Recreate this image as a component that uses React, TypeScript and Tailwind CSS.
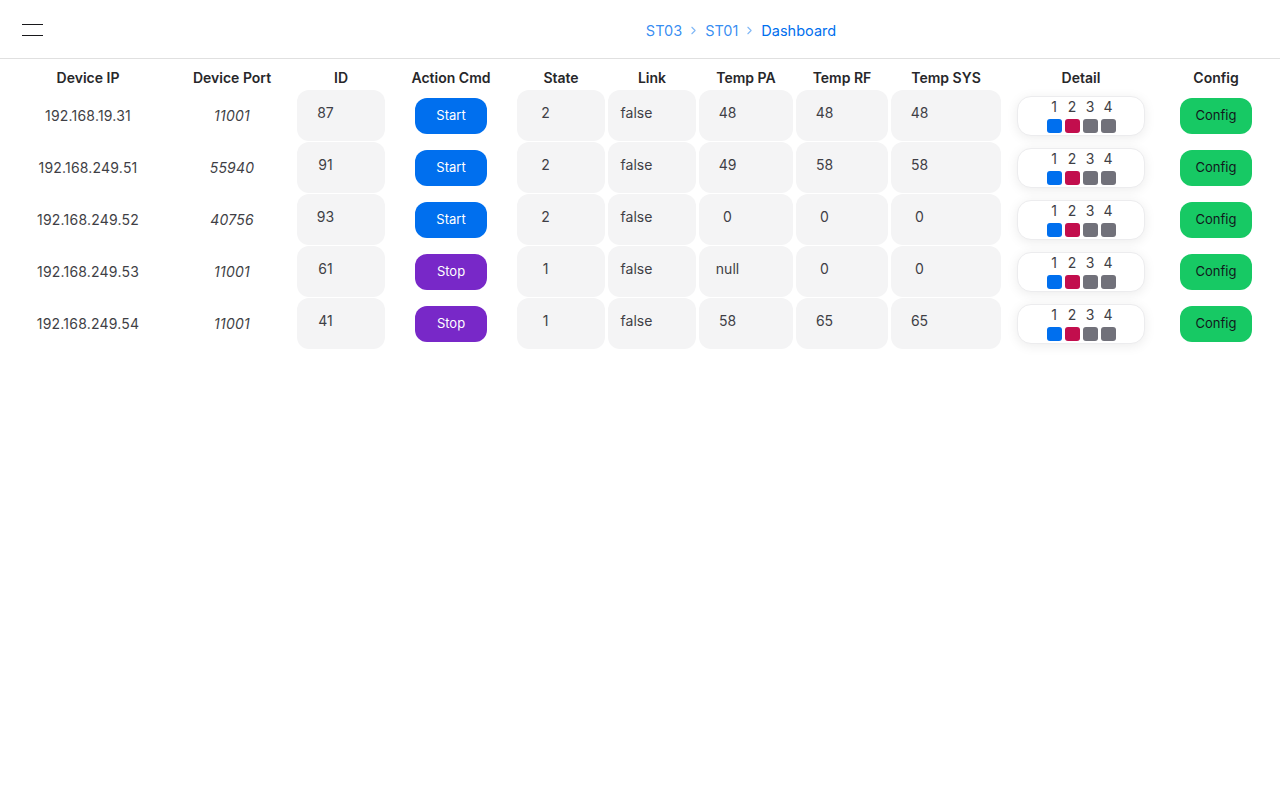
import React from 'react';
import { ChevronRight } from 'lucide-react';

type Row = {
  ip: string;
  port: string;
  id: string;
  running: boolean;
  state: string;
  link: string;
  tempPa: string;
  tempRf: string;
  tempSys: string;
};

const rows: Row[] = [
  { ip: '192.168.19.31', port: '11001', id: '87', running: false, state: '2', link: 'false', tempPa: '48', tempRf: '48', tempSys: '48' },
  { ip: '192.168.249.51', port: '55940', id: '91', running: false, state: '2', link: 'false', tempPa: '49', tempRf: '58', tempSys: '58' },
  { ip: '192.168.249.52', port: '40756', id: '93', running: false, state: '2', link: 'false', tempPa: '0', tempRf: '0', tempSys: '0' },
  { ip: '192.168.249.53', port: '11001', id: '61', running: true, state: '1', link: 'false', tempPa: 'null', tempRf: '0', tempSys: '0' },
  { ip: '192.168.249.54', port: '11001', id: '41', running: true, state: '1', link: 'false', tempPa: '58', tempRf: '65', tempSys: '65' },
];

const headers = ['Device IP', 'Device Port', 'ID', 'Action Cmd', 'State', 'Link', 'Temp PA', 'Temp RF', 'Temp SYS', 'Detail', 'Config'];

// gray read-only value box
const ValueCell = ({ value }: { value: string }) => (
  <div className="h-[51px] rounded-xl bg-[#f4f4f5] pt-[13px]">
    <div className="w-[57px] text-center text-sm leading-5 text-[#3f3f46]">{value}</div>
  </div>
);

const ChannelPill = () => {
  const channels = [
    { n: '1', color: 'bg-[#006FEE]' },
    { n: '2', color: 'bg-[#C20E4D]' },
    { n: '3', color: 'bg-[#71717A]' },
    { n: '4', color: 'bg-[#71717A]' },
  ];
  return (
    <div className="flex h-[51px] items-center justify-center">
      <div className="flex h-[40px] w-[128px] items-center justify-center rounded-[14px] border border-[#ececee] bg-white shadow-[0_2px_12px_rgba(0,0,0,0.08)]">
        <div className="flex gap-[3px]">
          {channels.map((c) => (
            <div key={c.n} className="flex w-[15px] flex-col items-center gap-[4px]">
              <span className="text-sm leading-4 text-[#3f3f46]">{c.n}</span>
              <span className={`block h-[14px] w-[15px] rounded-[3px] ${c.color}`}></span>
            </div>
          ))}
        </div>
      </div>
    </div>
  );
};

export default function App() {
  return (
    <div className="min-h-screen bg-white font-['Inter',sans-serif]">
      {/* Top bar */}
      <div className="flex h-[59px] items-center border-b border-[#e0e0e0]">
        <div className="w-[202px] pl-[22px]">
          <div className="flex w-[21px] flex-col gap-[10px] pt-[1px]">
            <span className="block h-px w-full bg-[#18181b]"></span>
            <span className="block h-px w-full bg-[#18181b]"></span>
          </div>
        </div>
        <div className="flex flex-1 items-center justify-center pt-[3px] text-[14.5px]">
          <span className="text-[#006FEE]/80">ST03</span>
          <ChevronRight className="mx-[5px] h-[13px] w-[13px] text-[#006FEE]/50" strokeWidth={2} />
          <span className="text-[#006FEE]/80">ST01</span>
          <ChevronRight className="mx-[5px] h-[13px] w-[13px] text-[#006FEE]/50" strokeWidth={2} />
          <span className="text-[#006FEE]">Dashboard</span>
        </div>
      </div>

      {/* Device table */}
      <div className="grid grid-cols-[170px_118px_88px_126px_88px_88px_94px_92px_110px_154px_110px] gap-x-[3px] gap-y-[1px] px-[3px]">
        {headers.map((h, i) => (
          <div
            key={h}
            className={`mb-px flex h-[29px] items-end justify-center text-sm font-semibold leading-5 text-[#27272a] ${i === 1 ? 'pr-[6px]' : ''}`}
          >
            {h}
          </div>
        ))}

        {rows.map((r) => (
          <React.Fragment key={r.ip}>
            <div className="flex h-[51px] items-center justify-center text-sm tracking-[0.2px] text-[#3f3f46]">{r.ip}</div>
            <div className="flex h-[51px] items-center justify-center pr-[6px] text-sm italic tracking-[0.2px] text-[#3f3f46]">{r.port}</div>
            <ValueCell value={r.id} />
            <div className="flex h-[51px] items-center justify-center">
              <button
                className={`h-[36px] w-[72px] rounded-xl text-[13px] text-white ${r.running ? 'bg-[#7828C8]' : 'bg-[#006FEE]'}`}
              >
                {r.running ? 'Stop' : 'Start'}
              </button>
            </div>
            <ValueCell value={r.state} />
            <ValueCell value={r.link} />
            <ValueCell value={r.tempPa} />
            <ValueCell value={r.tempRf} />
            <ValueCell value={r.tempSys} />
            <ChannelPill />
            <div className="flex h-[51px] items-center justify-center">
              <button className="h-[36px] w-[72px] rounded-xl bg-[#17C964] text-[13px] text-[#11181C]">Config</button>
            </div>
          </React.Fragment>
        ))}
      </div>
    </div>
  );
}
